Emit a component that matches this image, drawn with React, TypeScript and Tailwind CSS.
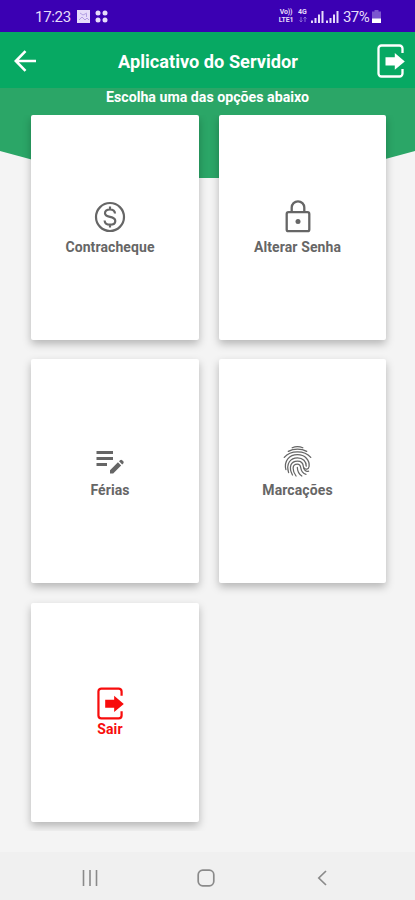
import type { ReactNode } from "react";
import { MdEditNote } from "react-icons/md";

function IconExit({ className }: { className?: string }) {
  return (
    <svg viewBox="0 0 28 34" fill="none" className={className}>
      <path
        d="M25.5 9V4.5a3 3 0 0 0-3-3H4.5a3 3 0 0 0-3 3v25a3 3 0 0 0 3 3h18a3 3 0 0 0 3-3V25"
        stroke="currentColor"
        strokeWidth="2.3"
      />
      <path d="M8.5 13.2h9.3V9l10 8.4-10 8.4v-4.3H8.5z" fill="currentColor" />
    </svg>
  );
}

function IconMoney() {
  return (
    <svg
      viewBox="0 0 36 36"
      fill="none"
      stroke="currentColor"
      strokeWidth="2.2"
      className="h-9 w-9"
    >
      <circle cx="18" cy="18" r="14" />
      <path d="M23 14.5c-.2-2.8-2.3-4-5-4s-5 1.3-5 3.7c0 2.2 1.8 3 5 3.7s5.3 1.6 5.3 4-2.3 3.8-5.3 3.8-5.2-1.4-5.4-4.2M18 7.5v3M18 25.5v3" />
    </svg>
  );
}

function IconLock() {
  return (
    <svg
      viewBox="0 0 36 36"
      fill="none"
      stroke="currentColor"
      strokeWidth="2.3"
      className="h-9 w-9"
    >
      <rect x="6.7" y="13.2" width="22.6" height="19" rx="1.8" />
      <path d="M11.7 13V8.6a6.3 6.3 0 0 1 12.6 0V13" />
      <circle cx="18" cy="22.5" r="2.5" fill="currentColor" stroke="none" />
    </svg>
  );
}

function IconFingerprint() {
  return (
    <svg
      viewBox="0 0 30 34"
      fill="none"
      stroke="currentColor"
      strokeWidth="1.3"
      strokeLinecap="round"
      className="mt-[2px] h-[33px] w-[29px]"
    >
      <path d="M9.5 2.8c3.4-1.5 7.6-1.5 11 0" />
      <path d="M5.5 6.5c5.6-3.2 13.4-3.2 19 0" />
      <path d="M1.3 12.8C4.5 9 9.3 7 15 7s10.5 2 13.7 5.8" />
      <path d="M3 25.5C.8 16.5 6.5 10 15 10c7.7 0 12.8 5.5 12 12.2-.4 3-4.2 3.8-5.6 1" />
      <path d="M5.8 28.5C3 19 7.7 13.2 15 13.2c5.6 0 9.2 3.8 9 8.6" />
      <path d="M9.8 31C5.5 22.5 8 16.5 15 16.5c3.6 0 5.8 2.3 6 5.5.3 4.3 3 5.8 5.5 5" />
      <path d="M13.5 32c-4-5.5-4.5-12.2 1.3-12.2 5 0 2.3 4.5 5.2 8 1 1.3 2.4 2.2 3.8 2.4" />
      <path d="M14.8 23c.1 4 1.5 7 4.7 9" />
    </svg>
  );
}

// Degraus de sinal do chip
function Signal({ className }: { className?: string }) {
  return (
    <svg viewBox="0 0 13 13" fill="currentColor" className={className}>
      <path d="M0 10.5h2V13H0zM3.5 8h2v5h-2zM7 4.5h2V13H7zM10.5 1h2v12h-2z" />
    </svg>
  );
}

function StatusBar() {
  return (
    <div className="flex h-8 items-center bg-[#3b00b3] pl-[35px] text-[#e6dcfa]">
      <span className="w-[37px] pt-[2px] text-[15px] tracking-[-0.3px]">
        17:23
      </span>
      <svg viewBox="0 0 13 13" className="ml-[5px] h-[13px] w-[13px]">
        <path d="M0 0h13v13H0z" fill="#e6dcfa" />
        <path
          d="M3 3l3 2 4-2M2 10l3-3 3 3 2-2 2 2M9.5 4v3"
          fill="none"
          stroke="#b39fe3"
        />
      </svg>
      <svg
        viewBox="0 0 13 13"
        fill="currentColor"
        className="ml-[5px] h-[13px] w-[13px]"
      >
        <circle cx="3" cy="3" r="2.5" />
        <circle cx="10" cy="3" r="2.5" />
        <circle cx="3" cy="10" r="2.5" />
        <circle cx="10" cy="10" r="2.5" />
      </svg>
      <div className="ml-[170px] flex w-4 flex-col items-center text-[7px] leading-[8px] font-bold tracking-[-0.2px]">
        <span>Vo))</span>
        <span>LTE1</span>
      </div>
      <div className="ml-[3px] flex w-[11px] flex-col items-center text-[7px] leading-[8px] font-bold">
        <span>4G</span>
        <svg
          viewBox="0 0 8 8"
          fill="none"
          stroke="#8b6bd6"
          className="h-2 w-2"
        >
          <path d="M2 1v5M.5 4.5L2 6l1.5-1.5M6 6V1M4.5 2.5L6 1l1.5 1.5" />
        </svg>
      </div>
      <Signal className="ml-[3px] h-[13px] w-[13px]" />
      <Signal className="ml-[2px] h-[13px] w-[13px]" />
      <span className="ml-[4px] w-[28px] pt-[2px] text-[15px] tracking-[-0.6px]">
        37%
      </span>
      <svg viewBox="0 0 9 13" className="ml-[1px] h-[13px] w-[9px]">
        <path d="M2.5 0h4v1.5H9V13H0V1.5h2.5z" fill="#7c55cf" />
        <path d="M0 8.5h9V13H0z" fill="#fff" />
      </svg>
    </div>
  );
}

function Header() {
  return (
    <header className="flex h-14 items-center justify-between bg-[#07a963] pt-px pr-[10px] pl-[14px] text-white">
      <svg
        viewBox="0 0 22 22"
        fill="none"
        stroke="currentColor"
        strokeWidth="2.6"
        className="h-[22px] w-[22px]"
      >
        <path d="M22 11H2M11.5 1.2L1.8 11l9.7 9.8" />
      </svg>
      <h1 className="ml-[3px] pt-[3px] text-[18.2px] font-bold">
        Aplicativo do Servidor
      </h1>
      <IconExit className="h-[34px] w-7" />
    </header>
  );
}

function Card({
  label,
  icon,
  color = "text-[#666666]",
  labelClass = "mt-[2px]",
}: {
  label: string;
  icon: ReactNode;
  color?: string;
  labelClass?: string;
}) {
  return (
    <button
      type="button"
      className={`flex flex-col items-center justify-center rounded-[2px] bg-white pr-[9px] shadow-[0_4px_8px_rgba(0,0,0,0.26)] ${color}`}
    >
      <span className="flex h-9 w-9 items-center justify-center">{icon}</span>
      <span
        className={`text-[14px] leading-5 font-bold tracking-[0.1px] ${labelClass}`}
      >
        {label}
      </span>
    </button>
  );
}

function NavBar() {
  return (
    <nav className="flex h-12 items-center bg-[#f0f0f0] pt-[3px] text-[#8a8a8a]">
      <svg
        viewBox="0 0 16 16"
        stroke="currentColor"
        strokeWidth="1.6"
        className="ml-[82px] h-4 w-4"
      >
        <path d="M1.5 0v16M8 0v16M14.5 0v16" />
      </svg>
      <svg
        viewBox="0 0 18 18"
        fill="none"
        stroke="currentColor"
        strokeWidth="1.7"
        className="ml-[99px] h-[18px] w-[18px]"
      >
        <rect x="1.2" y="1.2" width="15.6" height="15.6" rx="4.5" />
      </svg>
      <svg
        viewBox="0 0 10 16"
        fill="none"
        stroke="currentColor"
        strokeWidth="1.7"
        className="ml-[102px] h-4 w-[10px]"
      >
        <path d="M9 1L1.8 8 9 15" />
      </svg>
    </nav>
  );
}

export default function App() {
  return (
    <div className="flex h-[900px] w-[415px] flex-col overflow-hidden bg-[#f4f4f4] font-[Roboto,sans-serif]">
      <StatusBar />
      <Header />
      <main className="relative isolate flex-1">
        {/* Fundo verde com os cantos inferiores chanfrados */}
        <div className="absolute inset-x-0 top-0 -z-10 h-[90px] bg-[#2ba667] [clip-path:polygon(0_0,100%_0,100%_63px,315px_100%,100px_100%,0_63px)]" />
        <p className="h-[27px] text-center text-[14.2px] leading-[18px] font-bold text-white">
          Escolha uma das opções abaixo
        </p>
        <div className="grid h-[716px] grid-cols-[168px_167px] grid-rows-[225px_224px_219px] gap-x-5 gap-y-[19.25px] overflow-hidden pl-[30.5px]">
          <Card label="Contracheque" icon={<IconMoney />} />
          <Card label="Alterar Senha" icon={<IconLock />} />
          <Card label="Férias" icon={<MdEditNote className="h-9 w-9" />} />
          <Card label="Marcações" icon={<IconFingerprint />} />
          <Card
            label="Sair"
            color="text-[#f80c0c]"
            labelClass="-mt-[2px]"
            icon={<IconExit className="h-[33px] w-[27px]" />}
          />
        </div>
      </main>
      <NavBar />
    </div>
  );
}
